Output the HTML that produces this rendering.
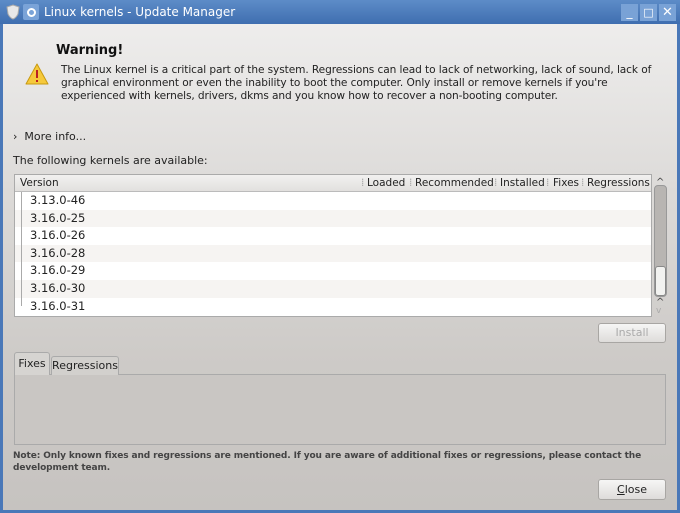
<!DOCTYPE html><html><head><style>
body{margin:0;width:680px;height:513px;overflow:hidden;font-family:"DejaVu Sans",sans-serif;font-size:11px;color:#222;position:relative;background:#4a78b8}
.a{position:absolute}
#win{left:3px;top:24px;width:674px;height:486px;background:linear-gradient(#eeedec,#dcdad8 35%,#cdcac7 70%,#c6c3c0)}
.btn{border:1px solid #a8a6a3;border-radius:3px;background:linear-gradient(#f6f6f5,#dedcda);text-align:center}
</style></head><body>
<div class="a" style="left:0;top:0;width:680px;height:24px;background:linear-gradient(#5d8cc8,#3f6eb0)"></div>
<svg class="a" style="left:5px;top:4px" width="16" height="16"><path d="M8 1 L14 3 L13 10 Q11 14 8 15 Q5 14 3 10 L2 3 Z" fill="#e8e8e8" stroke="#aaa"/></svg>
<div class="a" style="left:23px;top:4px;width:16px;height:16px;background:#7aa3d8;border-radius:2px"></div>
<div class="a" style="left:27px;top:8px;width:5px;height:5px;border:2px solid #fff;border-radius:50%"></div>
<div class="a" style="left:44px;top:5px;color:#fff;font-size:12px">Linux kernels - Update Manager</div>
<div class="a" style="left:621px;top:4px;width:17px;height:17px;background:#79a2d6;color:#fff;font-size:12px;text-align:center;line-height:17px">_</div>
<div class="a" style="left:640px;top:4px;width:17px;height:17px;background:#79a2d6;color:#fff;font-size:11px;text-align:center;line-height:17px">□</div>
<div class="a" style="left:659px;top:4px;width:17px;height:17px;background:#79a2d6;color:#fff;font-size:13px;font-weight:bold;text-align:center;line-height:17px">✕</div>
<div id="win" class="a"></div>
<div class="a" style="left:56px;top:43px;font-weight:bold;font-size:13px;color:#111">Warning!</div>
<svg class="a" style="left:25px;top:63px" width="24" height="22"><path d="M12 1 L23 21 L1 21 Z" fill="#f6c93b" stroke="#c89a10" stroke-linejoin="round"/><rect x="11" y="7" width="2" height="8" fill="#b22"/><rect x="11" y="17" width="2" height="2" fill="#b22"/></svg>
<div class="a" style="left:61px;top:64px;width:610px;line-height:13px;font-size:10.6px;letter-spacing:-0.1px">The Linux kernel is a critical part of the system. Regressions can lead to lack of networking, lack of sound, lack of graphical environment or even the inability to boot the computer. Only install or remove kernels if you're experienced with kernels, drivers, dkms and you know how to recover a non-booting computer.</div>
<div class="a" style="left:13px;top:130px">›&nbsp; More info...</div>
<div class="a" style="left:13px;top:154px">The following kernels are available:</div>
<div class="a" style="left:14px;top:174px;width:636px;height:141px;border:1px solid #aaa;background:#fff;overflow:hidden">
<div style="height:16px;background:linear-gradient(#f2f1f0,#e2e0de);border-bottom:1px solid #bbb;position:relative;font-size:10.5px">
<span class="a" style="left:5px;top:2px">Version</span>
<span class="a" style="left:346px;top:2px;color:#aaa">⁞</span><span class="a" style="left:352px;top:2px">Loaded</span>
<span class="a" style="left:394px;top:2px;color:#aaa">⁞</span><span class="a" style="left:400px;top:2px">Recommended</span>
<span class="a" style="left:479px;top:2px;color:#aaa">⁞</span><span class="a" style="left:485px;top:2px">Installed</span>
<span class="a" style="left:531px;top:2px;color:#aaa">⁞</span><span class="a" style="left:538px;top:2px">Fixes</span>
<span class="a" style="left:566px;top:2px;color:#aaa">⁞</span><span class="a" style="left:572px;top:2px">Regressions</span></div>
<div style="position:relative;font-size:11.5px">
<div style="height:17.6px;background:#fff"></div><div style="height:17.6px;background:#f6f4f2"></div><div style="height:17.6px;background:#fff"></div><div style="height:17.6px;background:#f6f4f2"></div><div style="height:17.6px;background:#fff"></div><div style="height:17.6px;background:#f6f4f2"></div><div style="height:17.6px;background:#fff"></div>
<div class="a" style="left:6px;top:0;width:1px;height:114px;background:#aaa"></div>
<div class="a" style="left:15px;top:0;line-height:17.6px">3.13.0-46<br>3.16.0-25<br>3.16.0-26<br>3.16.0-28<br>3.16.0-29<br>3.16.0-30<br>3.16.0-31</div>
</div></div>
<div class="a" style="left:656px;top:177px;font-size:10px;color:#444">^</div>
<div class="a" style="left:654px;top:185px;width:11px;height:110px;border:1px solid #999;border-radius:4px;background:#b8b5b2"></div>
<div class="a" style="left:655px;top:266px;width:9px;height:28px;border:1px solid #888;border-radius:3px;background:#f2f2f0"></div>
<div class="a" style="left:656px;top:297px;font-size:10px;color:#444">^</div>
<div class="a" style="left:656px;top:306px;font-size:9px;color:#aaa">v</div>
<div class="a btn" style="left:598px;top:323px;width:66px;height:18px;line-height:18px;color:#aaa">Install</div>
<div class="a" style="left:14px;top:374px;width:650px;height:69px;border:1px solid #aaa;background:#c9c6c3"></div>
<div class="a" style="left:14px;top:352px;width:34px;height:22px;border:1px solid #aaa;border-bottom:none;background:#d6d4d1;border-radius:3px 3px 0 0;text-align:center;line-height:22px">Fixes</div>
<div class="a" style="left:51px;top:356px;width:66px;height:18px;border:1px solid #aaa;border-bottom:none;background:#d2d0cd;border-radius:3px 3px 0 0;text-align:center;line-height:18px">Regressions</div>
<div class="a" style="left:13px;top:450px;font-weight:bold;font-size:9px;color:#444;line-height:12px;width:650px;letter-spacing:-0.1px">Note: Only known fixes and regressions are mentioned. If you are aware of additional fixes or regressions, please contact the development team.</div>
<div class="a btn" style="left:598px;top:479px;width:66px;height:19px;line-height:19px;color:#222"><u>C</u>lose</div>
</body></html>
